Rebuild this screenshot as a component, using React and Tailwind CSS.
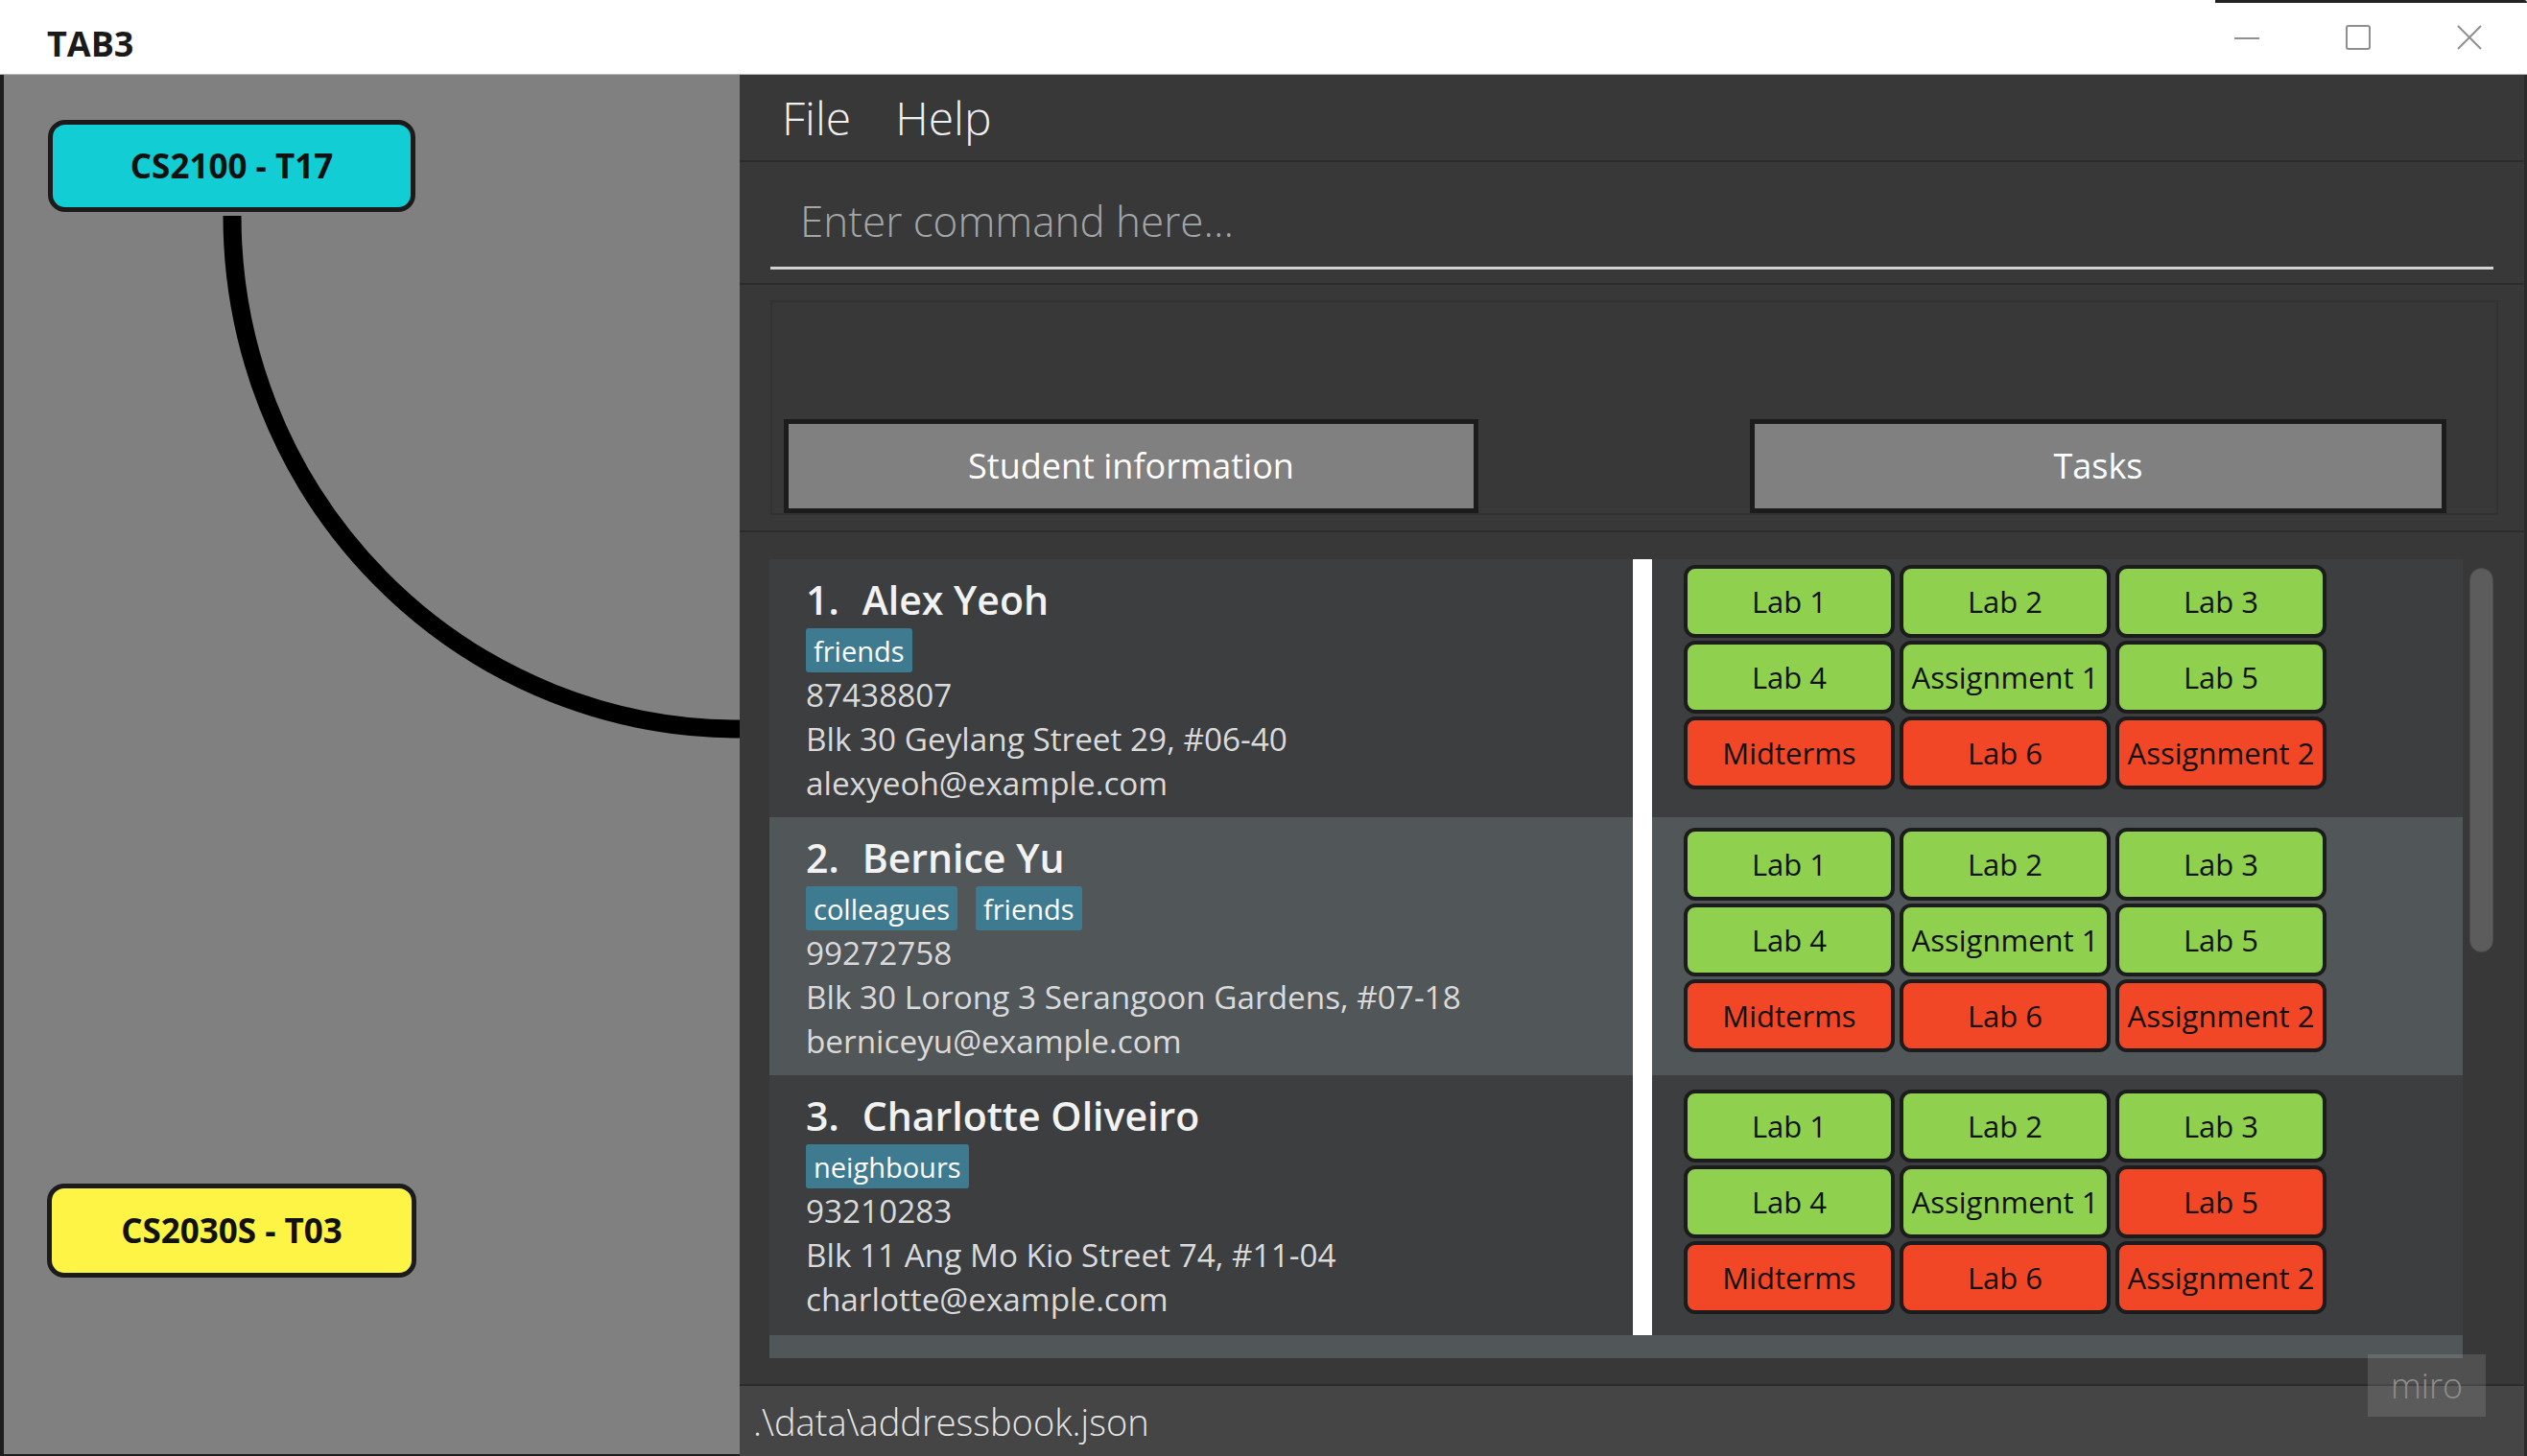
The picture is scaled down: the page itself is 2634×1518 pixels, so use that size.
import React from 'react';

const people = [
  {
    idx: '1.', name: 'Alex Yeoh', tags: ['friends'], phone: '87438807',
    address: 'Blk 30 Geylang Street 29, #06-40', email: 'alexyeoh@example.com',
    bg: 'bg-[#3c3e3f]', h: 'h-[269px]', mt: 'mt-[6px]', lab5Red: false,
  },
  {
    idx: '2.', name: 'Bernice Yu', tags: ['colleagues', 'friends'], phone: '99272758',
    address: 'Blk 30 Lorong 3 Serangoon Gardens, #07-18', email: 'berniceyu@example.com',
    bg: 'bg-[#515658]', h: 'h-[269px]', mt: 'mt-[11px]', lab5Red: false,
  },
  {
    idx: '3.', name: 'Charlotte Oliveiro', tags: ['neighbours'], phone: '93210283',
    address: 'Blk 11 Ang Mo Kio Street 74, #11-04', email: 'charlotte@example.com',
    bg: 'bg-[#3c3e3f]', h: 'h-[271px]', mt: 'mt-[15px]', lab5Red: true,
  },
];

function Chip({ label, red }) {
  return (
    <div
      className={
        'h-[76px] w-[220px] flex items-center justify-center rounded-[12px] border-[4px] border-[#1c1c1c] text-[31px] leading-none text-[#111111] ' +
        (red ? 'bg-[#f24726]' : 'bg-[#8fd14f]')
      }
    >
      {label}
    </div>
  );
}

function Cell({ p }) {
  const chips = [
    ['Lab 1', false], ['Lab 2', false], ['Lab 3', false],
    ['Lab 4', false], ['Assignment 1', false], ['Lab 5', p.lab5Red],
    ['Midterms', true], ['Lab 6', true], ['Assignment 2', true],
  ];
  return (
    <div className={`flex ${p.h} ${p.bg}`}>
      <div className="w-[900px] pl-[38px] pt-[22px] flex flex-col">
        <div className="text-[41px] leading-none font-semibold text-[#f2f2f2] flex">
          <span>{p.idx}</span>
          <span className="ml-[24px]">{p.name}</span>
        </div>
        <div className="flex gap-[19px] mt-[9px]">
          {p.tags.map((t) => (
            <div key={t} className="h-[46px] px-[8px] flex items-center bg-[#3e7b91] rounded-[3px] text-[29px] leading-none text-white">
              {t}
            </div>
          ))}
        </div>
        <div className="text-[33.3px] leading-[46px] text-[#dadada]">
          <div>{p.phone}</div>
          <div>{p.address}</div>
          <div>{p.email}</div>
        </div>
      </div>
      <div className="w-[20px] bg-white" />
      <div className={`ml-[33px] ${p.mt} self-start grid grid-cols-[220px_220px_220px] gap-x-[5px] gap-y-[3px]`}>
        {chips.map(([l, r], i) => (
          <Chip key={i} label={l} red={r} />
        ))}
      </div>
    </div>
  );
}

export default function App() {
  return (
    <div className="relative w-[2634px] h-[1518px] overflow-hidden flex flex-col bg-white font-['Open_Sans',sans-serif]">
      {/* Title bar */}
      <div className="relative h-[78px] shrink-0 bg-white border-b border-[#b8b8b8] flex items-center">
        <div className="absolute top-0 left-[2309px] right-0 h-[3px] bg-[#222222] rounded-tr-[10px]" />
        <div className="pl-[49px] pt-[14px] text-[36px] leading-none font-bold text-[#1a1a1a]">TAB3</div>
        <div className="ml-auto pr-[47px] flex items-center gap-[90px]">
          <svg width="26" height="26" viewBox="0 0 26 26">
            <line x1="0" y1="14" x2="26" y2="14" stroke="#8f8f8f" strokeWidth="2" />
          </svg>
          <svg width="26" height="26" viewBox="0 0 26 26">
            <rect x="1" y="1" width="24" height="24" rx="2" fill="none" stroke="#8f8f8f" strokeWidth="2" />
          </svg>
          <svg width="26" height="26" viewBox="0 0 26 26">
            <line x1="1" y1="1" x2="25" y2="25" stroke="#8f8f8f" strokeWidth="2" />
            <line x1="25" y1="1" x2="1" y2="25" stroke="#8f8f8f" strokeWidth="2" />
          </svg>
        </div>
      </div>

      {/* Body */}
      <div className="flex flex-1 min-h-0">
        {/* Left canvas */}
        <div className="relative w-[771px] shrink-0 bg-[#808080] border-l-[4px] border-b-[2px] border-[#1e1e1e]">
          <svg className="absolute inset-0" width="767" height="1438">
            <path d="M 238 147 A 528 535 0 0 0 767 682" fill="none" stroke="#000000" strokeWidth="19" />
          </svg>
          <div className="absolute left-[46px] top-[47px] w-[383px] h-[96px] rounded-[18px] border-[5px] border-[#1b1b1b] bg-[#12cdd4] flex items-center justify-center text-[35px] font-bold text-[#111111]">
            CS2100 - T17
          </div>
          <div className="absolute left-[45px] top-[1156px] w-[385px] h-[98px] rounded-[18px] border-[5px] border-[#1b1b1b] bg-[#fef445] flex items-center justify-center text-[35px] font-bold text-[#111111]">
            CS2030S - T03
          </div>
        </div>

        {/* Right app */}
        <div className="flex-1 flex flex-col bg-[#383838] border-r-[3px] border-[#2a2a2a]">
          {/* Menu */}
          <div className="h-[91px] shrink-0 flex items-center pl-[44px] border-b-[2px] border-[#2c2c2c] text-[48px] leading-none font-light text-[#f0f0f0]">
            <span>File</span>
            <span className="ml-[46px]">Help</span>
          </div>
          {/* Command box */}
          <div className="h-[128px] shrink-0 px-[32px] border-b-[2px] border-[#2c2c2c]">
            <div className="mt-[39px] pl-[31px] pb-[26px] border-b-[3px] border-[#d2d2d2] text-[44px] leading-none font-light text-[#a2a6a9]">
              Enter command here...
            </div>
          </div>
          {/* Result display */}
          <div className="h-[258px] shrink-0 pt-[16px] pb-[16px] pl-[32px] pr-[27px] border-b-[2px] border-[#2c2c2c]">
            <div className="h-full border-[2px] border-[#323232] flex items-end justify-between pl-[12px] pr-[52px]">
              <div className="w-[724px] h-[98px] border-[5px] border-[#1c1c1c] bg-[#808080] flex items-center justify-center text-[36px] text-white">
                Student information
              </div>
              <div className="w-[726px] h-[98px] border-[5px] border-[#1c1c1c] bg-[#808080] flex items-center justify-center text-[36px] text-white">
                Tasks
              </div>
            </div>
          </div>
          {/* List */}
          <div className="h-[888px] shrink-0 flex pt-[28px] pl-[31px] overflow-hidden">
            <div className="w-[1765px] flex flex-col">
              {people.map((p) => (
                <Cell key={p.idx} p={p} />
              ))}
              <div className="h-[24px] bg-[#515658]" />
            </div>
            <div className="ml-[7px] mt-[9px] w-[25px] h-[401px] rounded-full bg-[#5c5c5c] border border-[#4c4c4c]" />
          </div>
          {/* Status bar */}
          <div className="flex-1 flex items-center pl-[14px] border-t-[2px] border-[#2c2c2c] bg-[#454545] text-[38px] leading-none font-light text-[#e4e4e4]">
            .\data\addressbook.json
          </div>
        </div>
      </div>

      {/* miro watermark */}
      <div className="absolute left-[2468px] top-[1412px] w-[123px] h-[65px] bg-[#ffffff1f] flex items-center justify-center text-[36px] leading-none font-light text-[#8e8e8e]">
        miro
      </div>
    </div>
  );
}
